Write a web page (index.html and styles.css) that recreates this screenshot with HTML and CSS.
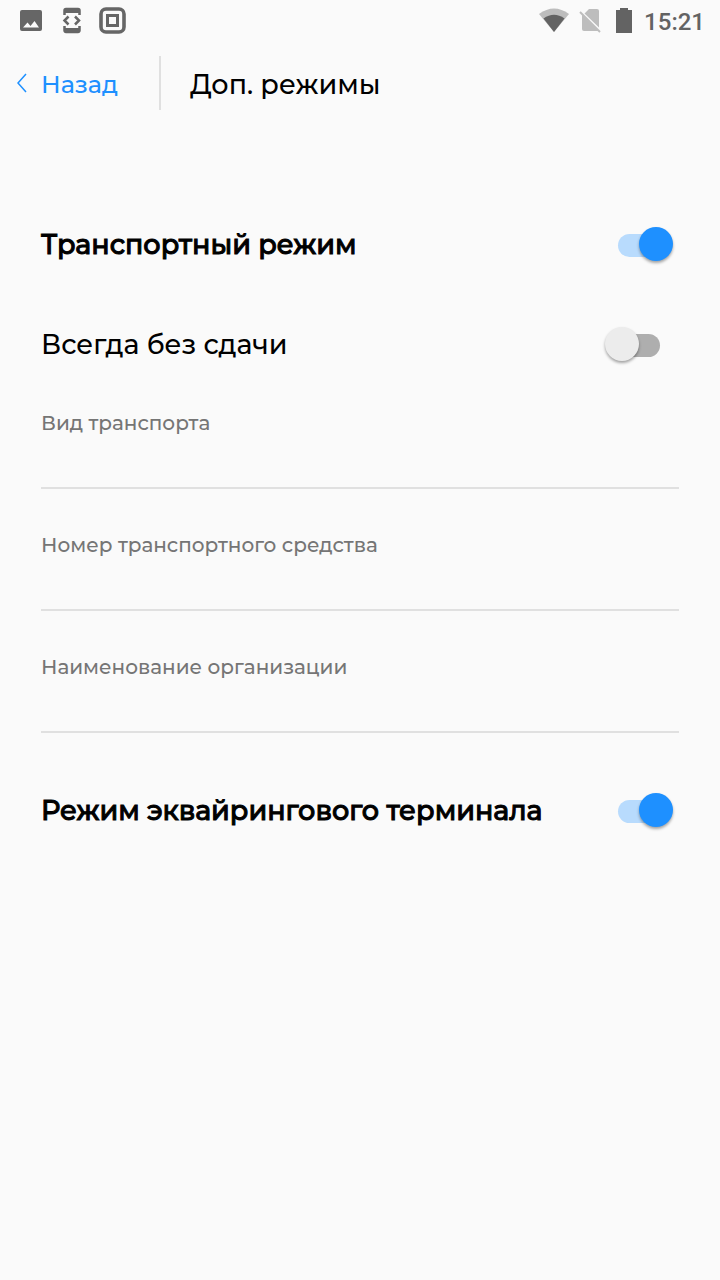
FILE: index.html
```html
<!DOCTYPE html>
<html lang="ru">
<head>
<meta charset="utf-8">
<meta name="viewport" content="width=device-width">
<title>Доп. режимы</title>
<link rel="stylesheet" href="styles.css">
</head>
<body>
<div class="status">
  <svg class="status-left" width="108" height="28" viewBox="0 0 108 28" aria-hidden="true">
    <path fill="#666" fill-rule="evenodd" d="M3 3h17a2 2 0 0 1 2 2v17a2 2 0 0 1-2 2H2a2 2 0 0 1-2-2V5a2 2 0 0 1 2-2zM3 20.500h16l-4.500-6.500-4 5-3-3.500z"/>
    <g fill="none" stroke="#666" stroke-width="2.500"><path d="M44.500 8V3.500a1.500 1.500 0 0 1 1.500-1.500h12a1.500 1.500 0 0 1 1.500 1.500V8M44.500 19v4.500a1.500 1.500 0 0 0 1.500 1.500h12a1.500 1.500 0 0 0 1.500-1.500V19M48.500 9.500l-4 4 4 4M55 9.500l4 4-4 4"/></g>
    <path fill="#666" d="M45 1h14v5H45zM45 21h14v5H45z"/>
    <rect x="81" y="2" width="23" height="23" rx="5" fill="none" stroke="#666" stroke-width="3.600"/>
    <rect x="87.500" y="8.500" width="10" height="10" fill="none" stroke="#666" stroke-width="3"/>
  </svg>
  <div class="status-right">
    <svg width="96" height="28" viewBox="0 0 96 28" aria-hidden="true">
      <path fill="#bdbdbd" d="M-1 7Q14-4 29 7L14 25z"/>
      <path fill="#636363" d="M3.500 11.500Q14 4 24.500 11.500L14 25z"/>
      <path fill="#bdbdbd" d="M49 2h8a2 2 0 0 1 2 2v16.500L44.500 6.500zM42 7.500L58.500 24H44a2 2 0 0 1-2-2z"/>
      <path d="M40 5l20 20" stroke="#bdbdbd" stroke-width="2"/>
      <path fill="#636363" d="M80 1h8v2h4v23H76V3h4z"/>
    </svg>
    <span class="clock">15:21</span>
  </div>
</div>
<header class="header">
  <button class="back" type="button">
    <svg width="10" height="20" viewBox="0 0 10 20" aria-hidden="true"><path d="M9 1L1 10 9 19" fill="none" stroke="currentColor" stroke-width="1.500"/></svg>
    <span>Назад</span>
  </button>
  <h1 class="title">Доп. режимы</h1>
</header>
<main class="main">
  <div class="row">
    <label class="name strong" for="transport">Транспортный режим</label>
    <input class="switch" type="checkbox" role="switch" id="transport" checked>
  </div>
  <div class="row">
    <label class="name" for="nochange">Всегда без сдачи</label>
    <input class="switch" type="checkbox" role="switch" id="nochange">
  </div>
  <div class="fields">
    <div class="field"><label class="caption" for="kind">Вид транспорта</label><input class="text" id="kind" type="text"></div>
    <div class="field"><label class="caption" for="number">Номер транспортного средства</label><input class="text" id="number" type="text"></div>
    <div class="field"><label class="caption" for="org">Наименование организации</label><input class="text" id="org" type="text"></div>
  </div>
  <div class="row">
    <label class="name strong" for="acquiring">Режим эквайрингового терминала</label>
    <input class="switch" type="checkbox" role="switch" id="acquiring" checked>
  </div>
</main>
</body>
</html>
```
FILE: styles.css
```css
* { box-sizing: border-box; }
body {
  margin: 0;
  min-height: 100vh;
  background: #fafafa;
  color: #000;
  font-family: Montserrat, Inter, "Open Sans", sans-serif;
}
.status {
  display: flex;
  justify-content: space-between;
  align-items: center;
  height: 42px;
  padding: 0 15px 0 20px;
}
.status svg { display: block; overflow: visible; }
.status-right { display: flex; align-items: center; gap: 8px; }
.clock {
  padding-top: 2px;
  font: 500 24px/28px Roboto, sans-serif;
  color: #636363;
}
.header {
  display: flex;
  margin-top: 14px;
  height: 54px;
}
.back {
  display: flex;
  align-items: center;
  gap: 14px;
  width: 161px;
  padding: 0 0 0 17px;
  border: 0;
  border-right: 2px solid #e0e0e0;
  background: none;
  color: #1e90ff;
  font: inherit;
  font-size: 24px;
  font-weight: 500;
  line-height: 32px;
}
.back span { padding-top: 4px; }
.title {
  margin: 0;
  padding: 2px 0 0 29px;
  font-size: 27px;
  line-height: 54px;
  font-weight: 500;
}
.main {
  display: flex;
  flex-direction: column;
  gap: 44px;
  padding: 106px 41px 40px;
}
.row {
  display: flex;
  align-items: center;
  justify-content: space-between;
  min-height: 56px;
  padding-right: 19px;
}
.name { padding-top: 2px; font-size: 27px; line-height: 36px; font-weight: 500; }
.strong { -webkit-text-stroke: 1px #000; }
.switch {
  appearance: none;
  position: relative;
  flex: none;
  width: 42px;
  height: 23px;
  margin: 3px 0 0;
  border-radius: 12px;
  background: #aeaeae;
}
.switch::before {
  content: "";
  position: absolute;
  top: -7px;
  left: -13px;
  width: 34px;
  height: 34px;
  border-radius: 50%;
  background: #ececec;
  box-shadow: 0 2px 3px rgba(0, 0, 0, 0.35);
}
.switch:checked { background: #b8dbfd; }
.switch:checked::before { left: 21px; background: #1e90ff; }
.fields {
  display: flex;
  flex-direction: column;
  gap: 43px;
  margin: -6px 0 5px;
}
.field { display: flex; flex-direction: column; }
.caption {
  font-size: 20px;
  line-height: 26px;
  font-weight: 500;
  color: #757575;
}
.text {
  width: 100%;
  height: 53px;
  padding: 0;
  border: 0;
  border-bottom: 2px solid #e0e0e0;
  background: none;
  font: inherit;
  font-size: 24px;
  outline: none;
}
```
